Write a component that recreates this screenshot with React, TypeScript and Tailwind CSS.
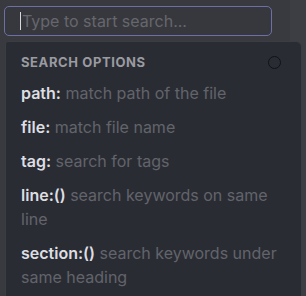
const OPTIONS = [
  { key: 'path:', desc: 'match path of the file' },
  { key: 'file:', desc: 'match file name' },
  { key: 'tag:', desc: 'search for tags' },
  { key: 'line:()', desc: 'search keywords on same line' },
  { key: 'section:()', desc: 'search keywords under same heading' },
]

export default function App() {
  return (
    <div
      className="relative h-[296px] w-[306px] overflow-hidden bg-[#393a3f]"
      style={{ fontFamily: 'Inter, "Noto Sans", sans-serif' }}
    >
      {/* lighter strip on the far right */}
      <div className="absolute inset-y-0 right-0 w-[16px] bg-[#3d3e43]" />

      <div className="relative px-[4px] pt-[6px]">
        <div className="flex h-[30px] w-[268px] items-center rounded-[5px] border border-[#6e6fa6] bg-[#37383d] pl-[15px]">
          <span className="mr-[1px] h-[18px] w-px bg-[#d8d8dc]" />
          <span className="text-[16px] text-[#66676d]">Type to start search...</span>
        </div>
      </div>

      <div className="relative ml-[5px] mt-[5px] h-[260px] w-[297px] rounded-tl-[3px] rounded-tr-[6px] border border-[#3b3d44] bg-[#2a2c33] px-[15px] pt-[11px]">
        <div className="flex items-center justify-between">
          <span className="text-[13px] font-bold tracking-[0.6px] text-[#9a9ba1]">SEARCH OPTIONS</span>
          <span className="mr-[5px] size-[13px] rounded-full border-[1.5px] border-[#111216]" />
        </div>
        <div className="mt-[8px] flex flex-col gap-[10px]">
          {OPTIONS.map(o => (
            <p key={o.key} className="w-[264px] text-[16px] leading-[24px]">
              <span className="font-semibold text-[#dddee2]">{o.key}</span>{' '}
              <span className="text-[#62646b]">{o.desc}</span>
            </p>
          ))}
        </div>
      </div>
    </div>
  )
}
